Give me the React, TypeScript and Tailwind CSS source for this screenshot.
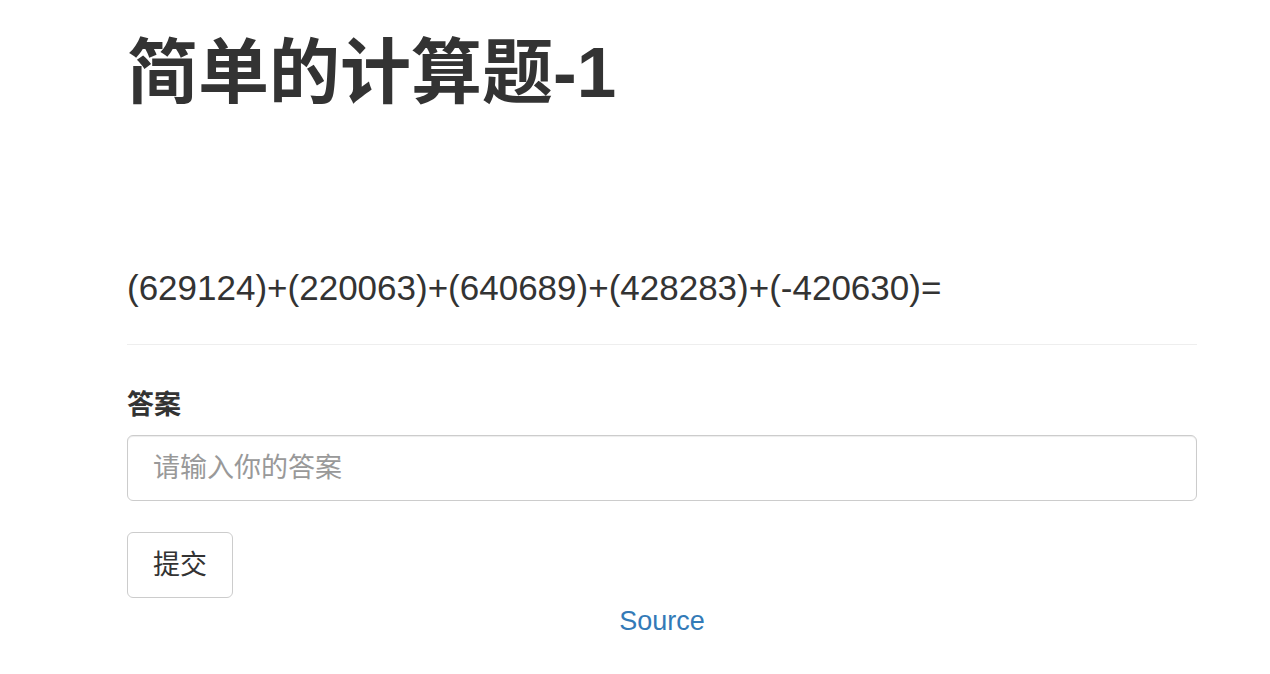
import React from 'react';

const font = { fontFamily: '"Liberation Sans", "Noto Sans CJK SC", sans-serif' };

export default function App() {
  return (
    <div className="min-h-screen bg-white text-[#333]" style={font}>
      <div className="ml-[127px] flex w-[1070px] flex-col">
        <h1 className="mt-[33px] text-[71px] font-bold leading-[79px]">简单的计算题-1</h1>

        <h3 className="mt-[156px] text-[35px] font-medium leading-[40px]">
          (629124)+(220063)+(640689)+(428283)+(-420630)=
        </h3>

        <hr className="mt-[36px] border-t border-[#eee]" />

        <form className="flex flex-col" onSubmit={(e) => e.preventDefault()}>
          <label htmlFor="answer" className="mt-[45px] text-[27px] font-bold leading-[30px]">
            答案
          </label>
          <input
            id="answer"
            type="text"
            placeholder="请输入你的答案"
            className="mt-[15px] h-[66px] w-full rounded-[6px] border border-[#ccc] px-[25px] text-[27px] shadow-[inset_0_1px_1px_rgba(0,0,0,0.075)] outline-none placeholder:text-[#999]"
          />
          <div>
            <button
              type="submit"
              className="mt-[31px] h-[66px] w-[106px] rounded-[6px] border border-[#ccc] bg-white text-[27px] text-[#333]"
            >
              提交
            </button>
          </div>
        </form>

        <a href="#" className="mt-[7px] self-center text-[27px] leading-[32px] text-[#337ab7]">
          Source
        </a>
      </div>
    </div>
  );
}
